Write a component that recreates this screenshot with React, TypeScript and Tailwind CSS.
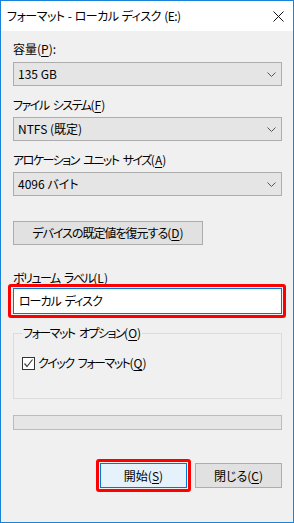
import React from "react";

const Key: React.FC<{ k: string }> = ({ k }) => (
  <span className="tracking-normal">
    (<span className="underline underline-offset-[2px]">{k}</span>)
  </span>
);

const Chevron = () => (
  <svg width="9" height="5" viewBox="0 0 9 5" className="ml-auto mr-[5px]">
    <path d="M0.5 0.5 L4.5 4.5 L8.5 0.5" fill="none" stroke="#555" strokeWidth="1" />
  </svg>
);

const Combo: React.FC<{ value: string; className?: string }> = ({ value, className }) => (
  <div
    className={`h-[24px] border border-[#adadad] bg-[#e5e5e5] flex items-center pl-[4px] ${className ?? ""}`}
  >
    <span>{value}</span>
    <Chevron />
  </div>
);

export default function App() {
  return (
    <div className="w-[294px] h-[523px] border border-[#1883d7] bg-[#f0f0f0] flex flex-col text-[12px] leading-[16px] text-black font-['Noto_Sans_CJK_JP',sans-serif] [font-feature-settings:'palt']">
      {/* title bar */}
      <div className="h-[30px] bg-white flex items-center pl-[6px]">
        <span className="tracking-[-0.5px] [word-spacing:1px]">フォーマット - ローカル ディスク (E:)</span>
        <svg width="11" height="11" viewBox="0 0 11 11" className="ml-auto mr-[9px]">
          <path d="M0.5 0.5 L10.5 10.5 M10.5 0.5 L0.5 10.5" stroke="#111" strokeWidth="1" />
        </svg>
      </div>

      <div className="flex flex-col pl-[12px] pr-[11px]">
        <div className="mt-[10px] h-[16px]">
          容量<Key k="P" />:
        </div>
        <Combo value="135 GB" className="mt-[5px]" />

        <div className="mt-[11px] h-[16px] tracking-[-1.5px] [word-spacing:3px]">
          ファイル システム<Key k="F" />
        </div>
        <Combo value="NTFS (既定)" className="mt-[4px]" />

        <div className="mt-[11px] h-[16px] tracking-[-1.5px] [word-spacing:3px]">
          アロケーション ユニット サイズ<Key k="A" />
        </div>
        <Combo value="4096 バイト" className="mt-[4px]" />

        <button className="mt-[25px] h-[24px] w-[190px] border border-[#adadad] bg-[#e1e1e1] flex items-center justify-center tracking-[-1px]">
          デバイスの既定値を復元する<Key k="D" />
        </button>

        <div className="mt-[25px] h-[16px] tracking-[-1.5px] [word-spacing:3px]">
          ボリューム ラベル<Key k="L" />
        </div>
        <div className="relative mt-[2px]">
          <div className="h-[26px] border border-[#0078d7] bg-white flex items-center pl-[5px] tracking-[-1px] [word-spacing:2px]">
            ローカル ディスク
          </div>
          <div className="absolute -top-[4px] -bottom-[4px] -left-[5px] -right-[4px] border-[3px] border-[#ff0000] rounded-[3px]" />
        </div>

        <div className="relative mt-[19px] h-[66px] border border-[#dcdcdc] pt-[21px] pl-[8px]">
          <div className="absolute -top-[9px] left-[8px] bg-[#f0f0f0] px-[1px] tracking-[-1.5px] [word-spacing:3px]">
            フォーマット オプション<Key k="O" />
          </div>
          <div className="flex items-center">
            <div className="w-[13px] h-[13px] border border-[#333] bg-white flex items-center justify-center">
              <svg width="11" height="11" viewBox="0 0 11 11">
                <path d="M1.5 5.5 L4 8.5 L9.5 1.5" fill="none" stroke="#444" strokeWidth="1.2" />
              </svg>
            </div>
            <span className="ml-[3px] tracking-[-1.5px] [word-spacing:3px]">
              クイック フォーマット<Key k="Q" />
            </span>
          </div>
        </div>

        <div className="mt-[16px] h-[15px] border border-[#bcbcbc] bg-[#e6e6e6]" />

        <div className="mt-[33px] flex justify-end gap-[8px]">
          <div className="relative">
            <button className="h-[25px] w-[87px] border border-[#0078d7] bg-[#e5f1fb] flex items-center justify-center">
              開始<Key k="S" />
            </button>
            <div className="absolute -inset-[4px] border-[3px] border-[#ff0000] rounded-[3px]" />
          </div>
          <button className="h-[25px] w-[87px] border border-[#adadad] bg-[#e1e1e1] flex items-center justify-center">
            閉じる<Key k="C" />
          </button>
        </div>
      </div>
    </div>
  );
}
